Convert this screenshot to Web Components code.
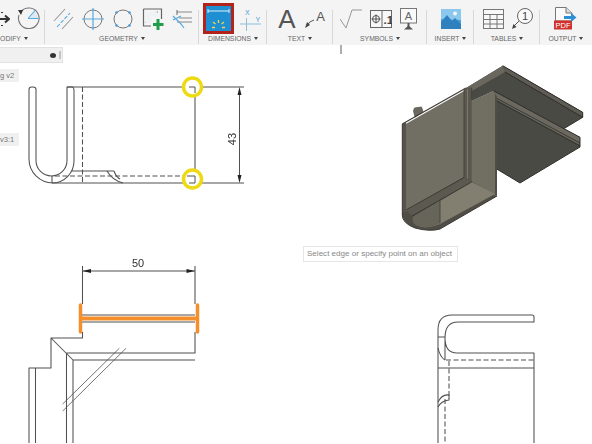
<!DOCTYPE html>
<html><head><meta charset="utf-8">
<style>html,body{margin:0;padding:0;background:#fff}</style></head><body>
<x-app></x-app>
<template id="app-t">
<style>
:host{display:flex;flex-direction:column;width:592px;height:444px;overflow:hidden;font-family:"Liberation Sans",Arial,sans-serif;background:#fff}
svg{display:block;flex:none}
.s{fill:none;stroke:#505050;stroke-width:1.05}
</style>
<x-toolbar>
 <x-group label="ODIFY" pad="0" gap="6" style="width:45px;--lp:0 17px 0 0">
  <svg width="10" height="20" viewBox="0 0 10 20"><path d="M0 10H8M5 6.500L9 10L5 13.500M2 4V3M2 16V17" fill="none" stroke="#333" stroke-width="2"/></svg>
  <svg width="24" height="24" viewBox="0 0 24 24"><path d="M5 4.500A10.300 10.300 0 1 1 3 8" fill="none" stroke="#777" stroke-width="1.100"/><path d="M2 3L7 3L5 8Z" fill="#333"/><path d="M13 11L19 4.500L22 11Z" fill="#dbe9f3"/><path d="M12 11.500L19 3.500M12 11.500H22.500" fill="none" stroke="#58a9dd" stroke-width="1.100"/></svg>
 </x-group>
 <x-group label="GEOMETRY" pad="8" gap="8" style="width:154px">
  <svg width="21" height="22" viewBox="0 0 21 22"><path d="M1 13L12 1M9 21L20 9" fill="none" stroke="#999" stroke-width="1.100"/><path d="M4 19L17 5" fill="none" stroke="#58a9dd" stroke-width="1.100" stroke-dasharray="4 1.500"/></svg>
  <svg width="22" height="22" viewBox="0 0 22 22"><circle cx="11" cy="11" r="9" fill="none" stroke="#777"/><path d="M0 11H22M11 0V22" stroke="#58a9dd" stroke-width="1.200"/></svg>
  <svg width="22" height="22" viewBox="0 0 22 22"><circle cx="11" cy="11" r="9" fill="none" stroke="#777"/><g fill="#4a9bd4"><circle cx="4.500" cy="4.500" r="1.300"/><circle cx="17.500" cy="4.500" r="1.300"/><circle cx="4.500" cy="17.500" r="1.300"/><circle cx="17.500" cy="17.500" r="1.300"/></g></svg>
  <svg width="22" height="24" viewBox="0 0 22 24"><path d="M1.500 2H19.500V12M1.500 2V19H9" fill="none" stroke="#666" stroke-width="1.200"/><path d="M4 16A12 12 0 0 1 16 5" fill="none" stroke="#888"/><path d="M4 5H15V9.500H9V16H4Z" fill="#eef2f5"/><path d="M16 12V23M11 17.500H21.500" stroke="#1f9d4c" stroke-width="3"/></svg>
  <svg width="21" height="20" viewBox="0 0 21 20"><path d="M5 3H20M7 9H20M5 13H20" stroke="#888" stroke-width="1.100"/><path d="M1 7L9 15L12 19M1 11L9 7" fill="none" stroke="#58a9dd" stroke-width="1.200"/><path d="M5 1V6" stroke="#666"/></svg>
 </x-group>
 <x-group label="DIMENSIONS" pad="4" gap="6" style="width:68px">
  <svg width="31" height="31" viewBox="0 0 31 31"><rect x="1.500" y="1.500" width="28" height="28" fill="#1e8fd3" stroke="#b2231b" stroke-width="3"/><path d="M5 8H26M5 6V10M26 6V10" stroke="#dff1fb" stroke-width="1"/><path d="M15.500 17V20M10 19L12.500 21M21 19L18.500 21M9 24.500H12M22 24.500H19" stroke="#f1d84a" stroke-width="1.300"/></svg>
  <svg width="21" height="24" viewBox="0 0 21 24"><path d="M0 17H21M6.500 11V24" stroke="#8fbddc" stroke-width="1"/><text x="5" y="8" font-size="7" fill="#4a9bd4" font-family="Liberation Sans">X</text><text x="15.500" y="14.500" font-size="7" fill="#4a9bd4" font-family="Liberation Sans">Y</text></svg>
 </x-group>
 <x-group label="TEXT" pad="10" gap="8" style="width:66px">
  <svg width="20" height="24" viewBox="0 0 20 24" overflow="visible"><text x="10" y="21" text-anchor="middle" font-size="26" fill="#555" font-family="Liberation Sans">A</text></svg>
  <svg width="22" height="20" viewBox="0 0 22 20"><text x="15.500" y="12" text-anchor="middle" font-size="13" fill="#555" font-family="Liberation Sans">A</text><path d="M9 11Q4 12 2 17" fill="none" stroke="#555"/><path d="M0 19L2 13L5 16Z" fill="#444"/></svg>
 </x-group>
 <x-group label="SYMBOLS" pad="7" gap="8" style="width:94px">
  <svg width="22" height="22" viewBox="0 0 22 22"><path d="M0 11L6 20L12 2H22" fill="none" stroke="#999" stroke-width="1"/></svg>
  <svg width="22" height="18" viewBox="0 0 22 18"><rect x=".5" y=".5" width="21" height="17" fill="#f8f8f8" stroke="#666"/><path d="M12 0V18" stroke="#666"/><circle cx="6" cy="9" r="3.500" fill="none" stroke="#555"/><path d="M1.500 9H10.500M6 4.500V13.500" stroke="#555"/><text x="13.500" y="13.500" font-size="11.500" font-weight="700" fill="#444" font-family="Liberation Sans">.1</text></svg>
  <svg width="17" height="22" viewBox="0 0 17 22"><rect x=".5" y=".5" width="16" height="14.500" fill="#fafafa" stroke="#777"/><text x="8.500" y="12" text-anchor="middle" font-size="11" fill="#666" font-family="Liberation Sans">A</text><path d="M8.500 15V19" stroke="#555" stroke-width="2"/><path d="M4 21.500L8.500 17.500L13 21.500Z" fill="#555"/></svg>
 </x-group>
 <x-group label="INSERT" pad="14" gap="0" style="width:47px">
  <svg width="20" height="20" viewBox="0 0 20 20"><rect width="20" height="20" fill="#4ba0dc"/><path d="M0 0H20V11L0 10Z" fill="#8cc8ee"/><path d="M0 20V13L6 6L11 12L14 9L20 15V20Z" fill="#2f80bf"/><circle cx="14" cy="4.500" r="2" fill="#f2f8fc"/></svg>
 </x-group>
 <x-group label="TABLES" pad="9" gap="8" style="width:66px">
  <svg width="21" height="20" viewBox="0 0 21 20"><rect x=".5" y=".5" width="20" height="19" fill="#f8f8f8" stroke="#777"/><path d="M0 5.500H21M0 10.500H21M0 15H21M7 5V20M14 5V20" stroke="#777"/></svg>
  <svg width="21" height="21" viewBox="0 0 21 21"><circle cx="13" cy="8" r="7.500" fill="#fafafa" stroke="#666"/><text x="13" y="12" text-anchor="middle" font-size="11" fill="#444" font-family="Liberation Sans">1</text><path d="M7 13L2 18" stroke="#555"/><path d="M0 21L1.500 16L4.500 19Z" fill="#444"/></svg>
 </x-group>
 <x-group label="OUTPUT" pad="14" gap="0" style="width:52px">
  <svg width="23" height="23" viewBox="0 0 23 23"><path d="M1.500 .5H12L18 6V14H1.500Z" fill="#fafafa" stroke="#777"/><path d="M12 .5V6H18" fill="#ddd" stroke="#777"/><rect x="0" y="13.500" width="18" height="9" fill="#d0312d"/><text x="9" y="21" text-anchor="middle" font-size="7.500" fill="#fff" font-family="Liberation Sans">PDF</text><path d="M10 9H17V6L22.500 10.500L17 15V12H10Z" fill="#2f8fd6"/></svg>
 </x-group>
</x-toolbar>
<x-sheet>
<svg slot="art" width="592" height="398" viewBox="0 46 592 398">
 <path d="M341 46V55" stroke="#777" stroke-width="1.200"/>
 <g class="s" stroke-linejoin="round">
  <path d="M36 161.500V90.500Q36 88 33 88H31.500Q29 88 29 90.500V160A24 24 0 0 0 53 184H195V88H67V161.500A15.500 15.500 0 0 1 36 161.500"/>
  <path d="M52 177V184M72 172H114M107 172Q112 181 123 184M114 172Q116 178 120 180"/>
  <path d="M67 88H72Q74 88 74 92V162A22 22 0 0 1 52 184"/>
  <path d="M82.500 88V184M55 177H190" stroke-dasharray="5 2.500"/>
  <path d="M195 88H244M195 184H244"/>
  <path d="M239.500 92V180"/>
  <path d="M82.500 267V305M195 267V305M82.500 272H195"/>
  <path d="M82 316H195M82 323H195"/>
  <path d="M82.500 333V339H51V369H29V444M35.500 369V444M51 339L73 361V444M66.500 354V444M66.500 354H195V333M73 361H195"/>
  <path d="M119.300 349.300L62.700 405M126 349.300L62.700 412" stroke-width=".8"/>
  <path d="M534 444V354H457Q445 354 445 339Q445 323 458 323H534V318Q534 316 532 316H452Q438 316 438 331V444M438 338H445V361M438 369H534"/>
  <path d="M438 349Q440 358 445 361M438 403Q442 395 449 396V401Q441 402 438 408"/>
  <path d="M446 361H534M449 362V400M445 400V444" stroke-dasharray="5 2.500"/>
 </g>
 <path d="M239.500 88L237.500 96H241.500ZM239.500 184L237.500 176H241.500ZM82.500 272L91 270V274ZM195 272L186.500 270V274Z" fill="#222"/>
 <text x="232" y="136" transform="rotate(-90 236 136)" text-anchor="middle" font-size="11" fill="#333" font-family="Liberation Sans">43</text>
 <text x="138" y="268" text-anchor="middle" font-size="11" fill="#333" font-family="Liberation Sans">50</text>
 <g fill="#fff" stroke="#eeda12" stroke-width="3.500">
  <circle cx="192.500" cy="88" r="9"/><circle cx="192.500" cy="180" r="9"/>
 </g>
 <path d="M189 88H195V94M187 177H195V184H189" fill="none" stroke="#505050"/>
 <path d="M80.500 306V333M197.500 306V333" stroke="#f58f2c" stroke-width="3.500" stroke-linecap="round"/>
 <path d="M81 319.500H196" stroke="#f58f2c" stroke-width="4"/>
 <g stroke-linejoin="round">
  <path d="M413.500 112L414.500 109L421.500 108L423 113L415 118Z" fill="#6b685f" stroke="#4a4942" stroke-width=".7"/>
  <path d="M466 89L502.700 66.700L582.700 113.300V118.300L563.300 130L493.300 92L472 102Z" fill="#4a4a45"/>
  <path d="M466 89L502.700 66.700L505 73L470 93Z" fill="#6a675e"/>
  <path d="M502.700 66.700L582.700 113.300V118.300L505 73Z" fill="#5e5c54"/>
  <path d="M502.700 66.700L582.700 113.300V118.300L563.300 130M505 73L582.700 118.300" stroke="#2f2e2a" fill="none"/>
  <path d="M493.300 91.700L580 138.300V148L520 184L496.700 170Z" fill="#4a4a45"/>
  <path d="M493.300 91.700L580 138.300V146L497 101Z" fill="#6a685f"/>
  <path d="M496 99L580 144M497 102L580 147" stroke="#2f2e2a" stroke-width=".8" fill="none"/>
  <path d="M493.300 91.700L580 138.300V148L520 184L496.700 170" stroke="#2f2e2a" fill="none"/>
  <path d="M404 126L464 92V180L404 213Z" fill="#716e63"/>
  <path d="M402.300 125L406 123.500V212L402.300 216Z" fill="#55534b"/>
  <path d="M402.300 125L466 89" stroke="#3d3c36" stroke-width="1.200"/>
  <path d="M464 90L471.700 88V184L464 179Z" fill="#5a584e"/>
  <path d="M467.500 90V181" stroke="#7f7b70" stroke-width=".9"/>
  <path d="M464 91V179M471.700 89V184" stroke="#3d3c36" stroke-width=".8"/>
  <path d="M471.700 102L493.300 91.700L495 95V196L471.700 183Z" fill="#716e62"/>
  <path d="M493.300 91.700L497 98V197L495 196V95Z" fill="#4f4e46"/>
  <path d="M402.300 214L464 178L497 197L440 230Q430 233 415 229Q402 224 402.300 214Z" fill="#4f4d46"/>
  <path d="M406 211L464 178.500L471.700 183L412 217Z" fill="#5c5a50"/>
  <path d="M413 218Q411 226 423 228Q431 229 440 225L495 195L471.700 183Z" fill="#827e70"/>
  <path d="M413 218L440 201.700V224.500Q431 229 423 228Q411 226 413 218Z" fill="#67645a"/>
  <path d="M440 201.700V224" stroke="#3f3e38" stroke-width=".8"/>
  <path d="M406 211L464 178.500M412 217L471.700 183" stroke="#33322c" stroke-width=".8" fill="none"/>
  <path d="M402.300 125V216Q402 224 415 229Q430 233 440 230L497 197" stroke="#3a3933" fill="none"/>
 </g>
</svg>
<x-panel slot="ui"></x-panel>
<x-tab slot="ui" style="top:24px">g v2</x-tab>
<x-tab slot="ui" style="top:88px">v3:1</x-tab>
<x-tip slot="ui">Select edge or specify point on an object</x-tip>
</x-sheet>
</template>
<script>
const sheet=(css,html)=>{const t=document.createElement('template');t.innerHTML='<style>'+css+'</style>'+html;return t};
const def=(n,t,extra)=>customElements.define(n,class extends HTMLElement{
 constructor(){super();this.attachShadow({mode:'open'}).appendChild(t.content.cloneNode(true));extra&&extra(this)}
});
def('x-app',document.getElementById('app-t'));
def('x-toolbar',sheet(':host{display:flex;height:45px;flex:none;background:#f4f4f4;box-shadow:0 1px 0 #e9e9e9}',`<slot></slot>`));
def('x-group',sheet(`:host{display:flex;flex:none;flex-direction:column;box-sizing:border-box;height:42px;margin-top:2px;background:linear-gradient(#d8d8d8,#d8d8d8) no-repeat right bottom/1px 34px}
:host(:last-child){background:none}
.i{display:flex;align-items:center;height:33px;flex:none}
.l{display:flex;justify-content:center;align-items:center;gap:3px;font:6.8px "Liberation Sans",Arial,sans-serif;color:#666;white-space:nowrap;height:9px;margin-top:-1px}
.t{width:0;height:0;border:2px solid transparent;border-top:3px solid #444;border-bottom:0}`,
`<div class="i"><slot></slot></div><div class="l"><span id="n"></span><i class="t"></i></div>`),el=>{
 queueMicrotask(()=>{const r=el.shadowRoot;r.getElementById('n').textContent=el.getAttribute('label');
 const i=r.querySelector('.i');i.style.paddingLeft=el.getAttribute('pad')+'px';i.style.gap=el.getAttribute('gap')+'px';
 const lp=getComputedStyle(el).getPropertyValue('--lp');if(lp)r.querySelector('.l').style.padding=lp;});
});
def('x-sheet',sheet(':host{display:block;position:relative;flex:1;min-height:0;overflow:hidden;background:#fff}::slotted(svg){position:absolute;left:0;top:0;display:block;filter:blur(.35px)}',`<slot name="art"></slot><slot name="ui"></slot>`));
def('x-panel',sheet(`:host{position:absolute;left:0;top:2px;width:63px;height:16px;box-sizing:border-box;background:#f0f0f0;border:1px solid #e2e2e2;border-left:0;display:flex;align-items:center;justify-content:flex-end;gap:3px;padding-right:1px}
.o{width:6px;height:5px;border-radius:50%;background:#333}.g{width:2px;height:8px;background:#c4c4c4}`,`<span class="o"></span><span class="g"></span>`));
def('x-tab',sheet(`:host{position:absolute;left:0;width:19px;box-sizing:border-box;height:13px;background:#f0f0f0;font:7.5px "Liberation Sans",Arial,sans-serif;color:#777;line-height:13px;text-align:right;padding-right:5px;white-space:nowrap;overflow:hidden}`,`<slot></slot>`));
def('x-tip',sheet(`:host{position:absolute;left:303px;top:201px;box-sizing:border-box;width:155px;height:16px;border:1px solid #e6e6e6;background:#fff;font:8.05px "Liberation Sans",Arial,sans-serif;color:#888;line-height:14px;padding-left:3px;white-space:nowrap}`,`<slot></slot>`));
</script>
</body></html>
